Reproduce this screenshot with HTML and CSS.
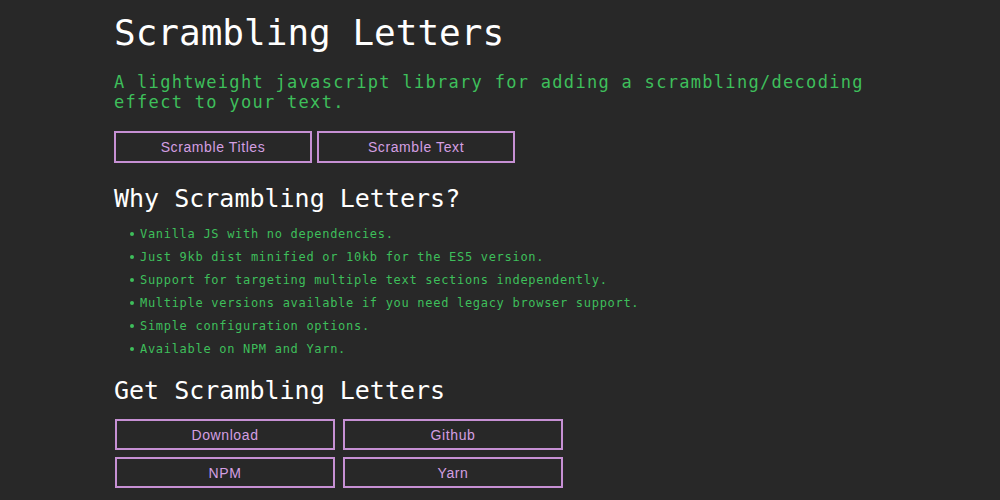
FILE: index.html
```html
<!DOCTYPE html>
<html lang="en">
<head>
    <meta charset="UTF-8">
    <meta name="viewport" content="width=device-width, initial-scale=1.0">
    <title>Scrambling Letters</title>
    <link rel="stylesheet" href="styles.css">
</head>
<body>
    <div class="container">
        <h1 class="title">Scrambling Letters</h1>
        <p class="lead">A lightweight javascript library for adding a scrambling/decoding effect to your text.</p>

        <div class="demo-buttons">
            <button class="btn">Scramble Titles</button>
            <button class="btn">Scramble Text</button>
        </div>

        <h2>Why Scrambling Letters?</h2>
        <ul class="features">
            <li>Vanilla JS with no dependencies.</li>
            <li>Just 9kb dist minified or 10kb for the ES5 version.</li>
            <li>Support for targeting multiple text sections independently.</li>
            <li>Multiple versions available if you need legacy browser support.</li>
            <li>Simple configuration options.</li>
            <li>Available on NPM and Yarn.</li>
        </ul>

        <h2>Get Scrambling Letters</h2>
        <div class="get-buttons">
            <button class="btn">Download</button>
            <button class="btn">Github</button>
            <button class="btn">NPM</button>
            <button class="btn">Yarn</button>
        </div>
    </div>
</body>
</html>
```

FILE: styles.css
```css
body {
    margin: 0;
    background-color: #282828;
    font-family: 'DejaVu Sans Mono', monospace;
    color: #ffffff;
}
.container {
    padding: 0 114px;
}
.title {
    margin: 0;
    padding-top: 10px;
    font-size: 36px;
    font-weight: normal;
    line-height: 46px;
}
.lead {
    margin: 16px 0 0;
    color: #3ebf5b;
    font-size: 17px;
    letter-spacing: 1.3px;
    line-height: 20px;
    max-width: 760px;
}
.btn {
    background-color: transparent;
    border: 2px solid #c690d4;
    color: #d49fe2;
    font-family: 'Liberation Sans', Arial, sans-serif;
    font-size: 14px;
    letter-spacing: 0.6px;
    cursor: pointer;
}
.demo-buttons {
    display: flex;
    gap: 5px;
    margin-top: 19px;
}
.demo-buttons .btn {
    width: 198px;
    height: 32px;
}
h2 {
    margin: 0;
    font-size: 25px;
    font-weight: normal;
    line-height: 32px;
}
.demo-buttons + h2 {
    margin-top: 20px;
}
.features {
    list-style: none;
    margin: 8px 0 0;
    padding: 0 0 0 14px;
    color: #3ebf5b;
    font-size: 12px;
    letter-spacing: 0.7px;
}
.features li {
    line-height: 23px;
}
.features li::before {
    content: '';
    display: inline-block;
    width: 4px;
    height: 4px;
    border-radius: 50%;
    background-color: #3ebf5b;
    margin: 0 6px 2px 2px;
    vertical-align: middle;
}
.features + h2 {
    margin-top: 14px;
}
.get-buttons {
    display: grid;
    grid-template-columns: 220px 220px;
    gap: 7px 8px;
    margin: 12px 0 0 1px;
}
.get-buttons .btn {
    height: 31px;
}
```
